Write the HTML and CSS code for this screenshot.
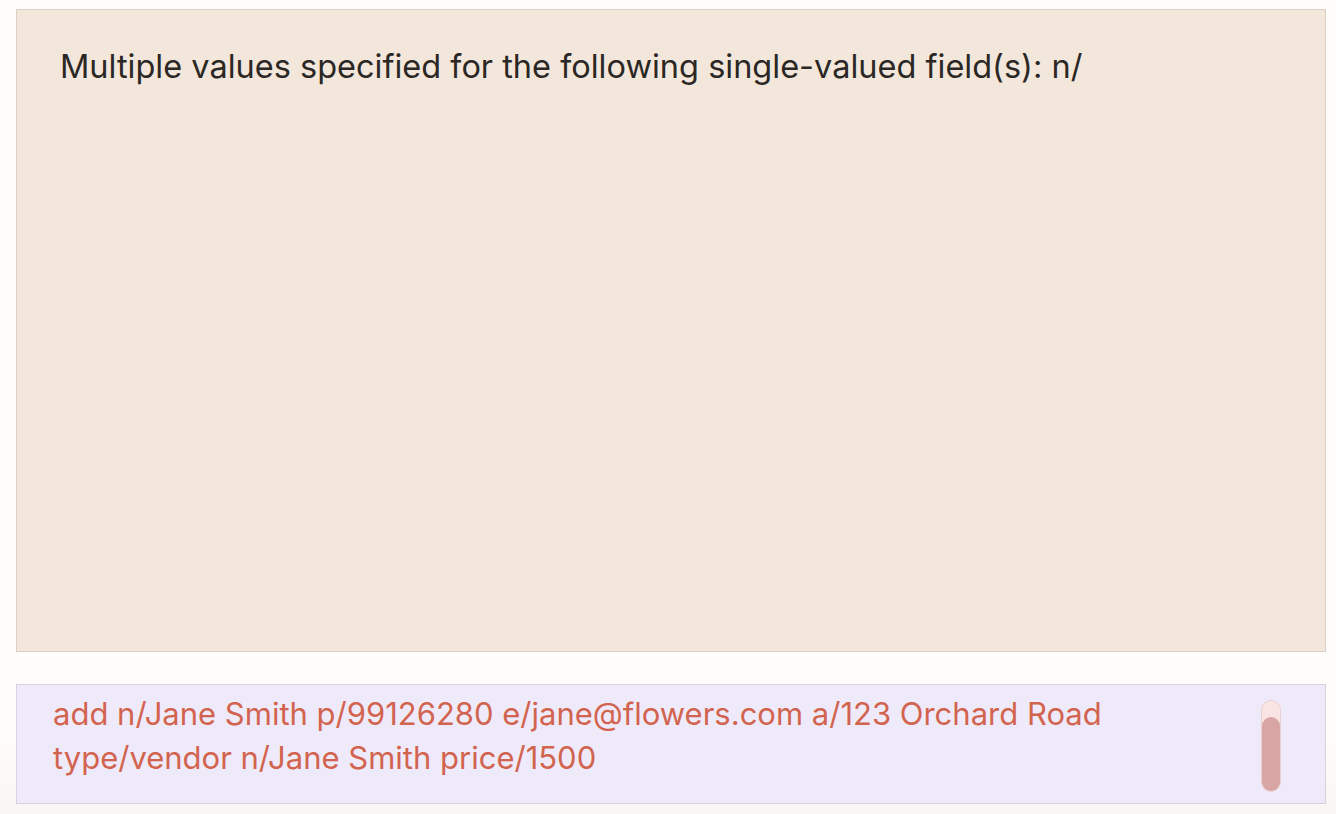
FILE: index.html
```html
<!DOCTYPE html>
<html>
<head>
<meta charset="utf-8">
<link rel="stylesheet" href="styles.css">
</head>
<body>
<div class="app">
  <div class="result">
    <p class="result-text">Multiple values specified for the following single-valued field(s): n/</p>
  </div>
  <div class="command">
    <div class="command-text">add n/Jane Smith p/99126280 e/jane@flowers.com a/123 Orchard Road<br>type/vendor n/Jane Smith price/1500</div>
    <div class="scrollbar"><div class="thumb"></div></div>
  </div>
</div>
</body>
</html>
```
FILE: styles.css
```css
html, body {
  margin: 0;
  height: 100%;
}
body {
  background: linear-gradient(180deg, #fefdfc 0%, #fefdfc 90%, #f7f6f5 100%);
  font-family: Inter, "Noto Sans", sans-serif;
}
.app {
  box-sizing: border-box;
  height: 814px;
  padding: 9px 10px 10px 16px;
  display: flex;
  flex-direction: column;
  gap: 32px;
}
.result {
  height: 643px;
  box-sizing: border-box;
  background: #f3e7db;
  border: 1.5px solid #dcd0c6;
  padding: 37px 40px 0 43px;
}
.result-text {
  margin: 0;
  font-size: 32.5px;
  line-height: 40px;
  color: #2b2725;
}
.command {
  height: 120px;
  box-sizing: border-box;
  background: #efeafa;
  border: 1.5px solid #d6d2e2;
  padding: 7px 44px 0 36px;
  display: flex;
  justify-content: space-between;
  align-items: flex-start;
}
.command-text {
  font-size: 31px;
  line-height: 44px;
  color: #d2644f;
}
.scrollbar {
  margin-top: 8px;
  width: 20px;
  height: 92px;
  box-sizing: border-box;
  background: #f9e3e3;
  border: 1px solid #ead0d0;
  border-radius: 10px;
  display: flex;
  flex-direction: column;
  justify-content: flex-end;
}
.thumb {
  height: 74px;
  background: #d6a5a4;
  border-radius: 9px;
}
```
